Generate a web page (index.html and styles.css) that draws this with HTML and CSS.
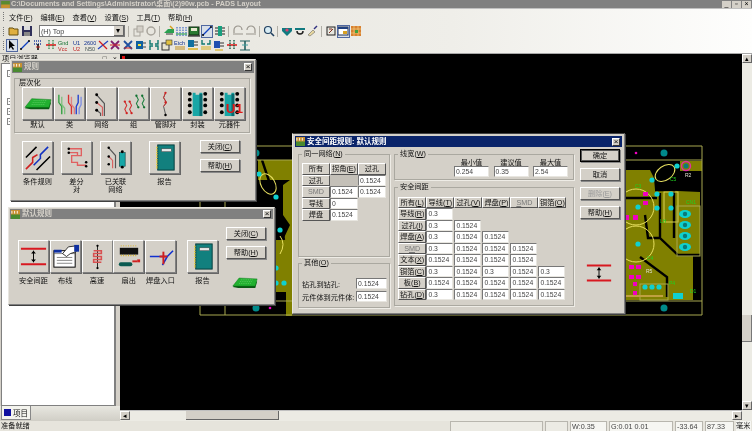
FILE: index.html
```html
<!DOCTYPE html>
<html lang="zh-CN">
<head>
    <meta charset="UTF-8">
    <title>PADS Layout</title>
    <link rel="stylesheet" href="styles.css">
</head>
<body>
<svg class="defs" width="0" height="0">
    <symbol id="i-board" viewBox="0 0 30 30">
        <path d="M2 20 L8 21 L27 21 L29 14 L10 13 Z" fill="#0a5a14"/>
        <path d="M2 19 L9 10 L29 11 L27 19 Z" fill="#22b030" stroke="#0a7a18" stroke-width=".5"/>
        <path d="M11 12h14M10 14h14M9 16h14" stroke="#7fe080" stroke-width=".6" stroke-dasharray="1 1"/>
    </symbol>
    <symbol id="i-chip" viewBox="0 0 30 30">
        <path d="M10 4h3v2h4v-2h3v24h-10z" fill="#18a6a6"/>
        <path d="M17 5h3v23h-3z" fill="#0a6a70"/>
        <g fill="#000">
            <circle cx="7" cy="5" r="2"/><circle cx="7" cy="11" r="2"/><circle cx="7" cy="17" r="2"/><circle cx="7" cy="24" r="2"/>
            <circle cx="23" cy="5" r="2"/><circle cx="23" cy="11" r="2"/><circle cx="23" cy="17" r="2"/><circle cx="23" cy="24" r="2"/>
        </g>
    </symbol>
    <symbol id="i-report" viewBox="0 0 30 30">
        <rect x="8" y="2" width="17" height="26" fill="#12807e" stroke="#063c3c"/>
        <rect x="12" y="6" width="10" height="3" fill="#e8e8e8" stroke="#444" stroke-width=".5"/>
        <path d="M7 4v23" stroke="#e8d040" stroke-width="1.5" stroke-dasharray="1.5 1"/>
    </symbol>
    <symbol id="i-gap" viewBox="0 0 30 30">
        <path d="M2 7h26M2 23h26" stroke="#d81820" stroke-width="2"/>
        <path d="M15 9v12" stroke="#000"/>
        <path d="M12.5 12 L15 9 L17.5 12 Z M12.5 18 L15 21 L17.5 18 Z" fill="#000"/>
    </symbol>
</svg>

<div class="app">
    <div class="titlebar">
        <svg class="app-icon" viewBox="0 0 10 8"><rect width="10" height="8" fill="#5a8a30"/><rect y="4" width="10" height="4" fill="#c89030"/></svg>
        <span class="title-text">C:\Documents and Settings\Administrator\桌面\(2)90w.pcb - PADS Layout</span>
        <span class="win-btns"><i>_</i><i>▫</i><i>×</i></span>
    </div>

    <div class="bars">
        <div class="menubar">
            <span class="grip"></span>
            <span>文件(<u>F</u>)</span><span>编辑(<u>E</u>)</span><span>查看(<u>V</u>)</span><span>设置(<u>S</u>)</span><span>工具(<u>T</u>)</span><span>帮助(<u>H</u>)</span>
        </div>
        <div class="toolbar tb-one">
            <span class="grip"></span>
            <b class="tool"><svg viewBox="0 0 12 12"><path d="M1 10V3h4l1 1h4v6z" fill="#e0b040" stroke="#665010"/></svg></b>
            <b class="tool"><svg viewBox="0 0 12 12"><rect x="1" y="1" width="10" height="10" fill="#30305a"/><rect x="3" y="1" width="6" height="4" fill="#ddd"/><rect x="3" y="7" width="6" height="4" fill="#888"/></svg></b>
            <span class="combo"><span>(H) Top</span><i>▾</i></span>
            <span class="sep"></span>
            <b class="tool"><svg viewBox="0 0 12 12"><rect x="2" y="4" width="6" height="7" fill="none" stroke="#a8a49c"/><rect x="5" y="1" width="6" height="6" fill="#d4d0c8" stroke="#a8a49c"/></svg></b>
            <b class="tool"><svg viewBox="0 0 12 12"><circle cx="6" cy="6" r="4" fill="none" stroke="#a8a49c" stroke-width="1.5"/></svg></b>
            <span class="sep"></span>
            <b class="tool"><svg viewBox="0 0 12 12"><path d="M1 8 L5 4 H11 V8 Z" fill="#28a050"/><path d="M3 9h7" stroke="#333"/><path d="M7 1l3 3" stroke="#d8a020" stroke-width="1.5"/></svg></b>
            <b class="tool"><svg viewBox="0 0 12 12"><g stroke="#2050c0" stroke-dasharray="1.5 1"><path d="M2 2v9M5 2v9M8 2v9M11 2v9"/></g><path d="M1 9h11" stroke="#20a040"/></svg></b>
            <b class="tool"><svg viewBox="0 0 12 12"><rect x="1" y="2" width="10" height="8" fill="#2a7a30" stroke="#102a10"/><rect x="3" y="3" width="6" height="3" fill="#e8e8d0"/><path d="M0 11h12" stroke="#000"/></svg></b>
            <b class="tool on"><svg viewBox="0 0 12 12"><path d="M2 10 L10 2" stroke="#1040c0" stroke-width="1.3"/><circle cx="2" cy="10" r="1"/><circle cx="10" cy="2" r="1"/></svg></b>
            <b class="tool"><svg viewBox="0 0 12 12"><rect x="4" y="1" width="4" height="10" fill="#18a080"/><path d="M1 3h3M1 6h3M1 9h3M8 3h3M8 6h3M8 9h3" stroke="#222" stroke-width="1.2"/></svg></b>
            <span class="sep"></span>
            <b class="tool"><svg viewBox="0 0 12 12"><path d="M2 8V5a3 3 0 0 1 8 0" fill="none" stroke="#98948c" stroke-width="1.2"/><path d="M1 9h10" stroke="#98948c"/></svg></b>
            <b class="tool"><svg viewBox="0 0 12 12"><path d="M10 8V5a3 3 0 0 0-8 0" fill="none" stroke="#98948c" stroke-width="1.2"/><path d="M1 9h10" stroke="#98948c"/></svg></b>
            <span class="sep"></span>
            <b class="tool"><svg viewBox="0 0 12 12"><circle cx="5" cy="5" r="3.5" fill="#d8ecf4" stroke="#204060" stroke-width="1.2"/><path d="M8 8l3 3" stroke="#204060" stroke-width="1.6"/></svg></b>
            <span class="sep"></span>
            <b class="tool"><svg viewBox="0 0 12 12"><path d="M1 3h10v3l-5 5-5-5z" fill="#127a80"/><circle cx="6" cy="5" r="1.6" fill="#e04070"/></svg></b>
            <b class="tool"><svg viewBox="0 0 12 12"><path d="M1 3h10v2H1z" fill="#127a80"/><path d="M3 6a3 3 0 1 0 6 0" fill="none" stroke="#222" stroke-width="1.5"/></svg></b>
            <b class="tool"><svg viewBox="0 0 12 12"><path d="M2 10 L7 5 L9 7 L4 11 Z" fill="#e8d8a0" stroke="#555" stroke-width=".5"/><path d="M8 4l3-3" stroke="#303080" stroke-width="1.5"/></svg></b>
            <span class="sep"></span>
            <b class="tool"><svg viewBox="0 0 12 12"><rect x="2" y="2" width="8" height="8" fill="#e8e8e0" stroke="#222"/><path d="M4 8l4-4M4 4h3" stroke="#803020"/></svg></b>
            <b class="tool on"><svg viewBox="0 0 12 12"><rect x="1" y="2" width="10" height="8" fill="#fff" stroke="#203050"/><rect x="1" y="2" width="10" height="2" fill="#204080"/><rect x="6" y="6" width="4" height="3" fill="#d8a020"/></svg></b>
            <b class="tool"><svg viewBox="0 0 12 12"><rect x="1" y="1" width="10" height="10" fill="#d88030"/><path d="M1 4h10M1 8h10M4 1v10M8 1v10" stroke="#f0d080" stroke-width=".7"/><rect x="5" y="5" width="3" height="3" fill="#40a040"/></svg></b>
        </div>
        <div class="toolbar tb-two">
            <span class="grip"></span>
            <b class="tool on"><svg viewBox="0 0 12 12"><path d="M3 1v9l2-2 2 3 1-1-2-3h3z" fill="#000"/></svg></b>
            <b class="tool"><svg viewBox="0 0 12 12"><path d="M2 10L10 2" stroke="#1040c0" stroke-width="1.2"/><circle cx="2" cy="10" r="1"/><circle cx="10" cy="2" r="1"/></svg></b>
            <b class="tool"><svg viewBox="0 0 12 12"><path d="M2 2h8M2 5h8" stroke="#2040a0" stroke-dasharray="1 1" stroke-width="1.5"/><path d="M6 5v6" stroke="#000" stroke-width="1.5"/><path d="M4 8h4" stroke="#c02020"/></svg></b>
            <b class="tool"><svg viewBox="0 0 12 12"><path d="M1 6h10" stroke="#e02020" stroke-width="1.6"/><path d="M4 1v10M8 1v10" stroke="#208040" stroke-dasharray="1.5 1" stroke-width="1.2"/></svg></b>
            <b class="tool"><svg viewBox="0 0 12 12"><text x="0" y="5.5" class="tiny gn">Gnd</text><text x="0" y="11.5" class="tiny rd">Vcc</text></svg></b>
            <b class="tool"><svg viewBox="0 0 12 12"><text x="2" y="5.5" class="tiny bl">U1</text><text x="2" y="11.5" class="tiny rd">U2</text></svg></b>
            <b class="tool"><svg viewBox="0 0 12 12"><text x="0" y="5.5" class="tiny bl">2600</text><text x="1" y="11.5" class="tiny gr">N50</text></svg></b>
            <b class="tool"><svg viewBox="0 0 12 12"><path d="M1 10L11 2" stroke="#2040c0" stroke-width="1.3"/><path d="M2 2l8 8" stroke="#d02020" stroke-width="1.3"/></svg></b>
            <b class="tool"><svg viewBox="0 0 12 12"><path d="M2 2l8 8M10 2l-8 8" stroke="#802070" stroke-width="1.8"/><path d="M1 6h10" stroke="#d02020"/></svg></b>
            <b class="tool"><svg viewBox="0 0 12 12"><path d="M2 2l8 8M10 2l-8 8" stroke="#2050a0" stroke-width="1.8"/><path d="M2 9h8" stroke="#d02020"/></svg></b>
            <b class="tool"><svg viewBox="0 0 12 12"><rect x="1" y="2" width="7" height="8" fill="#1060a0"/><path d="M8 4h3M8 8h3" stroke="#444" stroke-width="1.2"/><rect x="3" y="5" width="3" height="2" fill="#f0e040"/></svg></b>
            <b class="tool"><svg viewBox="0 0 12 12"><path d="M2 1v4h3M10 1v4H7M2 11V7h3M10 11V7H7" fill="none" stroke="#107a70" stroke-width="1.4"/></svg></b>
            <b class="tool"><svg viewBox="0 0 12 12"><rect x="1" y="4" width="7" height="7" fill="#e8e4d0" stroke="#333"/><rect x="5" y="1" width="6" height="5" fill="#e0c040" stroke="#333" stroke-width=".6"/></svg></b>
            <b class="tool"><svg viewBox="0 0 12 12"><text x="0" y="5.5" class="tiny bl">Etch</text><path d="M1 8h10M1 10h10" stroke="#c09020" stroke-width="1.2"/></svg></b>
            <b class="tool"><svg viewBox="0 0 12 12"><rect x="1" y="1" width="6" height="7" fill="#1070a0"/><path d="M7 3h4M7 6h4" stroke="#333"/><path d="M1 10h10" stroke="#d8b020" stroke-width="1.5"/></svg></b>
            <b class="tool"><svg viewBox="0 0 12 12"><path d="M2 1v4h3M10 1v4H7" fill="none" stroke="#107a70" stroke-width="1.4"/><path d="M1 8h10M1 10h10" stroke="#d8b020" stroke-width="1.2"/></svg></b>
            <b class="tool"><svg viewBox="0 0 12 12"><rect x="1" y="2" width="6" height="7" fill="#2050b0"/><path d="M7 4h4M7 7h4" stroke="#333"/><path d="M2 11h8" stroke="#d8b020" stroke-width="1.2"/></svg></b>
            <b class="tool"><svg viewBox="0 0 12 12"><path d="M1 6h10" stroke="#e02020" stroke-width="1.6"/><path d="M4 1v10M8 1v10" stroke="#105a40" stroke-dasharray="1.5 1" stroke-width="1.4"/></svg></b>
            <b class="tool"><svg viewBox="0 0 12 12"><path d="M1 2h10M1 11h10" stroke="#206060" stroke-width="1.2"/><path d="M6 2v9" stroke="#206060" stroke-width="1.6"/><path d="M3 6h6" stroke="#40a0a0"/></svg></b>
        </div>
    </div>

    <div class="workspace">
        <aside class="explorer">
            <div class="explorer-head"><span>项目浏览器</span><span class="head-btns">-□×</span></div>
            <div class="tree">
                <i class="node top">-</i>
                <i class="node">+</i>
                <i class="node">+</i>
                <i class="node">+</i>
            </div>
            <div class="tabs"><span class="tab"><i class="tab-dot"></i>项目</span></div>
        </aside>

        <div class="view">
            <div class="view-row">
                <main class="canvas">
                    <i class="origin"></i>
                    <svg class="pcb" width="622" height="357" viewBox="120 54 622 357">
                        <g fill="#808000">
                            <path d="M258 160H292V316H286V292H236V282H275V240H283L290 225L283 215V185L290 180H258Z"/>
                            <path d="M626 170H650L654 178L655 190L700 192V255H693V300H626Z"/>
                            <path d="M680 161H702V171H680Z"/>
                        </g>
                        <g fill="none" stroke="#000" stroke-width="2.4">
                            <path d="M626 198H657M660 193V238L678 255H700M660 238H648L645 215M640 257L667 277V297M655 190H674V238"/>
                            <path d="M262 186L278 206L284 240M262 160L272 190"/>
                        </g>
                        <g fill="none" stroke="#a8a850">
                            <path d="M200 146H702V315H200Z"/>
                            <path d="M225 160H702M225 301H702M225 146V315"/>
                            <rect x="664" y="192" width="14" height="30" stroke="#d8d050"/>
                            <rect x="677" y="206" width="23" height="50"/>
                            <rect x="640" y="284" width="28" height="16"/>
                        </g>
                        <g fill="none" stroke="#e8e060">
                            <circle cx="636" cy="207" r="18"/>
                            <circle cx="636" cy="244" r="18"/>
                            <ellipse cx="665" cy="173" rx="11" ry="7" transform="rotate(-35 665 173)"/>
                            <ellipse cx="268" cy="184" rx="7" ry="11" transform="rotate(-30 268 184)"/>
                            <path d="M280 236q6 8 0 18"/>
                        </g>
                        <g fill="#10d0d0">
                            <circle cx="664" cy="153" r="3.5" fill="#008a8a"/>
                            <circle cx="664" cy="308" r="3.5" fill="#008a8a"/>
                            <circle cx="256" cy="153" r="3.5" fill="#008a8a"/>
                            <circle cx="256" cy="308" r="3.5" fill="#008a8a"/>
                            <circle cx="677" cy="166" r="2.6"/><circle cx="652" cy="180" r="2.6"/>
                            <circle cx="657" cy="194" r="2.6"/><circle cx="671" cy="194" r="2.6"/>
                            <circle cx="657" cy="208" r="2.6"/><circle cx="671" cy="208" r="2.6"/>
                            <circle cx="638" cy="207" r="2.6"/><circle cx="638" cy="244" r="2.6"/>
                            <circle cx="645" cy="287" r="2.6"/><circle cx="652" cy="287" r="2.6"/><circle cx="659" cy="287" r="2.6"/>
                            <circle cx="259" cy="174" r="2.6"/><circle cx="276" cy="197" r="2.6"/><circle cx="280" cy="230" r="2.6"/>
                            <circle cx="276" cy="268" r="2.6"/><circle cx="276" cy="283" r="2.6"/><circle cx="284" cy="283" r="2.6"/>
                            <rect x="673" y="293" width="10" height="6"/>
                            <ellipse cx="685" cy="214" rx="6" ry="4"/><ellipse cx="685" cy="225" rx="6" ry="4"/>
                            <ellipse cx="685" cy="236" rx="6" ry="4"/><ellipse cx="685" cy="247" rx="6" ry="4"/>
                        </g>
                        <g fill="#0a7a7a">
                            <circle cx="685" cy="214" r="2.2"/><circle cx="685" cy="225" r="2.2"/>
                            <circle cx="685" cy="236" r="2.2"/><circle cx="685" cy="247" r="2.2"/>
                            <circle cx="686" cy="166" r="2.5"/>
                        </g>
                        <circle cx="686" cy="166" r="4.5" fill="none" stroke="#e030a0" stroke-width="1.4"/>
                        <g fill="#f000c0">
                            <circle cx="636" cy="153" r="1.3"/><circle cx="270" cy="308" r="1.3"/>
                            <rect x="643" y="192" width="5" height="4"/><rect x="643" y="201" width="5" height="4"/>
                            <rect x="625" y="215" width="4" height="5"/><rect x="633" y="215" width="5" height="5"/>
                            <rect x="629" y="265" width="5" height="4"/><rect x="636" y="265" width="5" height="4"/>
                            <rect x="629" y="275" width="5" height="4"/><rect x="636" y="275" width="5" height="4"/>
                            <rect x="633" y="282" width="4" height="4"/><rect x="633" y="291" width="4" height="4"/>
                        </g>
                        <rect x="626" y="295" width="37" height="2" fill="#c0a040"/>
                        <g class="silk">
                            <text x="685" y="177">R2</text><text x="646" y="273">R5</text>
                        </g>
                        <g class="nets">
                            <text x="635" y="188">C3</text><text x="670" y="181">C5</text><text x="686" y="204">CN1</text><text x="660" y="223">LH</text>
                            <text x="647" y="260">C4</text><text x="669" y="285">P4</text><text x="690" y="293">D1</text>
                        </g>
                    </svg>
                </main>
                <div class="vscroll">
                    <span class="sb-btn">▴</span>
                    <div class="vtrack"><span class="vthumb"></span></div>
                    <span class="sb-btn">▾</span>
                </div>
            </div>
            <div class="hscroll">
                <span class="sb-btn">◂</span>
                <div class="htrack"><span class="hthumb"></span></div>
                <span class="sb-btn">▸</span>
            </div>
        </div>
    </div>

    <div class="statusbar">
        <span class="ready">准备就绪</span>
        <span class="pane p1"></span>
        <span class="pane p2"></span>
        <span class="pane p3">W:0.35</span>
        <span class="pane p4">G:0.01 0.01</span>
        <span class="pane p5">-33.64</span>
        <span class="pane p6">87.33</span>
        <span class="pane p7">毫米</span>
    </div>

    <!-- 规则 -->
    <section class="dialog rules-win">
        <header class="cap off">
            <svg class="cap-icon" viewBox="0 0 10 10"><rect width="10" height="10" fill="#c89030"/><rect y="5" width="10" height="5" fill="#4a8a30"/><path d="M1 1v3M4 1v3M7 1v3" stroke="#fff"/></svg>
            <span>规则</span><b class="cap-x">×</b>
        </header>
        <div class="group hier">
            <div class="hier-title">层次化</div>
            <div class="tile-row">
                <div class="tile-item"><span class="tile"><svg viewBox="0 0 30 30"><use href="#i-board"/></svg></span><em>默认</em></div>
                <div class="tile-item"><span class="tile"><svg viewBox="0 0 30 30"><g fill="none" stroke-width="1.4"><path d="M4 6v8l3 4v8" stroke="#30a040"/><path d="M7 8v8l3 4v6" stroke="#80c080"/><path d="M14 6v8l3 4v8" stroke="#d83030"/><path d="M17 8v8l3 4v6" stroke="#e08080"/><path d="M24 6v8l-2 4v8" stroke="#2040d0"/><path d="M27 8v8l-2 4v6" stroke="#8090e0"/></g></svg></span><em>类</em></div>
                <div class="tile-item"><span class="tile"><svg viewBox="0 0 30 30"><path d="M10 6l8 9v13" fill="none" stroke="#555" stroke-width="1.2"/><path d="M10 14l6 5v9" fill="none" stroke="#d86060" stroke-width="1.2"/><path d="M10 22l4 3v3" fill="none" stroke="#555" stroke-width="1.2"/><circle cx="10" cy="6" r="1.5"/><circle cx="10" cy="14" r="1.5"/><circle cx="10" cy="22" r="1.5"/></svg></span><em>网络</em></div>
                <div class="tile-item"><span class="tile"><svg viewBox="0 0 30 30"><g fill="none" stroke-width="1.1"><path d="M6 13l2 4-2 4 2 4M11 13l2 4-2 4 2 4" stroke="#d03030"/><path d="M18 7l2 4-2 4 2 4M24 7l2 4-2 4 2 4" stroke="#208040"/></g><g fill="#d02020"><circle cx="6" cy="13" r="1.2"/><circle cx="11" cy="13" r="1.2"/><circle cx="8" cy="25" r="1.2"/><circle cx="13" cy="25" r="1.2"/></g><g fill="#107030"><circle cx="18" cy="7" r="1.2"/><circle cx="24" cy="7" r="1.2"/><circle cx="20" cy="19" r="1.2"/><circle cx="26" cy="19" r="1.2"/></g></svg></span><em>组</em></div>
                <div class="tile-item"><span class="tile"><svg viewBox="0 0 30 30"><path d="M15 4l-2 5 3 5-3 4 2 8" fill="none" stroke="#555" stroke-width="1"/><path d="M15 4l-2 5 3 5-3 4" fill="none" stroke="#d03030" stroke-width="1"/><circle cx="15" cy="4" r="1.2" fill="#d02020"/><circle cx="15" cy="14" r="1.2" fill="#d02020"/><circle cx="15" cy="27" r="1.3"/></svg></span><em>管脚对</em></div>
                <div class="tile-item"><span class="tile"><svg viewBox="0 0 30 30"><use href="#i-chip"/></svg></span><em>封装</em></div>
                <div class="tile-item"><span class="tile"><svg viewBox="0 0 30 30"><use href="#i-chip"/><text x="11" y="25" class="u1">U1</text></svg></span><em>元器件</em></div>
            </div>
        </div>
        <div class="rules-lower">
            <div class="tile-item"><span class="tile"><svg viewBox="0 0 30 30"><path d="M3 15L14 4M14 28L28 14" stroke="#000" stroke-width="1.6"/><path d="M3 27L10 20V15L15 12" fill="none" stroke="#d02020" stroke-width="1.6"/><path d="M11 23L18 16V12L26 4" fill="none" stroke="#1030c0" stroke-width="1.6"/></svg></span><em>条件规则</em></div>
            <div class="tile-item"><span class="tile"><svg viewBox="0 0 30 30"><path d="M7 6h13v7H10v7h6v3h9M7 10h9v3" fill="none" stroke="#e06060" stroke-width="1.4"/><circle cx="7" cy="6" r="1.3"/><circle cx="7" cy="10" r="1.3"/><circle cx="25" cy="20" r="1.3"/><circle cx="25" cy="24" r="1.3"/></svg></span><em>差分<br>对</em></div>
            <div class="tile-item"><span class="tile"><svg viewBox="0 0 30 30"><path d="M8 5l7 8v13" fill="none" stroke="#555" stroke-width="1.2"/><path d="M8 14l4 4v8" fill="none" stroke="#d86060" stroke-width="1.2"/><circle cx="8" cy="5" r="1.3"/><circle cx="8" cy="14" r="1.3"/><circle cx="8" cy="22" r="1.3"/><rect x="19" y="10" width="6" height="14" fill="#18a6a6" stroke="#063c3c" stroke-width=".6"/><circle cx="22" cy="9" r="1.5"/><circle cx="22" cy="25" r="1.5"/></svg></span><em>已关联<br>网络</em></div>
            <div class="tile-item report"><span class="tile"><svg viewBox="0 0 30 30"><use href="#i-report"/></svg></span><em>报告</em></div>
            <div class="side-btns">
                <span class="btn">关闭(<u>C</u>)</span>
                <span class="btn">帮助(<u>H</u>)</span>
            </div>
        </div>
    </section>

    <!-- 默认规则 -->
    <section class="dialog default-win">
        <header class="cap off">
            <svg class="cap-icon" viewBox="0 0 10 10"><rect width="10" height="10" fill="#c89030"/><rect y="5" width="10" height="5" fill="#4a8a30"/><path d="M1 1v3M4 1v3M7 1v3" stroke="#fff"/></svg>
            <span>默认规则</span><b class="cap-x">×</b>
        </header>
        <div class="default-body">
            <div class="default-tiles">
                <div class="tile-item"><span class="tile"><svg viewBox="0 0 30 30"><use href="#i-gap"/></svg></span><em>安全间距</em></div>
                <div class="tile-item"><span class="tile"><svg viewBox="0 0 30 30"><rect x="3" y="9" width="22" height="17" fill="#fff" stroke="#000"/><path d="M3 12h22M6 16h16M6 19h16M6 22h16" stroke="#555" stroke-width=".7"/><rect x="3" y="8" width="8" height="3" fill="#1030a0"/><path d="M12 12l6-7 8-1v6l-6 2-4 3z" fill="#fff" stroke="#000" stroke-width=".8"/><rect x="24" y="3" width="5" height="7" fill="#1030a0"/></svg></span><em>布线</em></div>
                <div class="tile-item"><span class="tile"><svg viewBox="0 0 30 30"><path d="M15 3v24" stroke="#222"/><path d="M11 9h8v3h-8v3h8v3h-8v3h8" fill="none" stroke="#d85050" stroke-width="1.6"/><circle cx="15" cy="4" r="1.2"/><circle cx="15" cy="27" r="1.2"/></svg></span><em>高速</em></div>
                <div class="tile-item"><span class="tile"><svg viewBox="0 0 30 30"><rect x="6" y="6" width="19" height="7" fill="#111"/><path d="M7 14h17" stroke="#d8b020" stroke-dasharray="1 1.5" stroke-width="1.4"/><path d="M7 4h17" stroke="#d8b020" stroke-dasharray="1 1.5"/><rect x="5" y="21" width="14" height="4" rx="2" fill="#0a5a50"/><path d="M19 20h5" stroke="#d02020" stroke-width="2"/><rect x="24" y="18" width="3" height="3" fill="#d02020"/></svg></span><em>扇出</em></div>
                <div class="tile-item"><span class="tile"><svg viewBox="0 0 30 30"><path d="M4 15h18M22 15l6-6M17 24l5-9" fill="none" stroke="#1030d0" stroke-width="1.6"/><path d="M18 10v13" stroke="#d02020" stroke-width="2"/><path d="M14 15h8" stroke="#d02020" stroke-width="2"/></svg></span><em>焊盘入口</em></div>
            </div>
            <div class="tile-item report"><span class="tile"><svg viewBox="0 0 30 30"><use href="#i-report"/></svg></span><em>报告</em></div>
            <div class="side-col">
                <span class="btn">关闭(<u>C</u>)</span>
                <span class="btn">帮助(<u>H</u>)</span>
                <svg class="mini-board" viewBox="0 0 30 30"><use href="#i-board"/></svg>
            </div>
        </div>
    </section>

    <!-- 安全间距规则 -->
    <section class="dialog gap-win">
        <header class="cap">
            <svg class="cap-icon" viewBox="0 0 10 10"><rect width="10" height="10" fill="#c89030"/><rect y="5" width="10" height="5" fill="#4a8a30"/><path d="M1 1v3M4 1v3M7 1v3" stroke="#fff"/></svg>
            <span>安全间距规则: 默认规则</span><b class="cap-x">×</b>
        </header>
        <div class="gap-body">
            <div class="gap-left">
                <fieldset class="group same-net">
                    <legend>同一网络(<u>N</u>)</legend>
                    <div class="same-grid">
                        <span class="hd">所有</span><span class="hd">拐角(<u>E</u>)</span><span class="hd">过孔</span>
                        <span class="hd">过孔</span><span class="blank"></span><span class="val">0.1524</span>
                        <span class="hd dim">SMD</span><span class="val">0.1524</span><span class="val">0.1524</span>
                        <span class="hd">导线</span><span class="val">0</span><span></span>
                        <span class="hd">焊盘</span><span class="val">0.1524</span><span></span>
                    </div>
                </fieldset>
                <fieldset class="group other">
                    <legend>其他(<u>O</u>)</legend>
                    <div class="other-row"><label>钻孔到钻孔:</label><span class="val">0.1524</span></div>
                    <div class="other-row"><label>元件体到元件体:</label><span class="val">0.1524</span></div>
                </fieldset>
            </div>
            <div class="gap-mid">
                <fieldset class="group width">
                    <legend>线宽(<u>W</u>)</legend>
                    <div class="width-grid">
                        <label>最小值</label><label>建议值</label><label>最大值</label>
                        <span class="val">0.254</span><span class="val">0.35</span><span class="val">2.54</span>
                    </div>
                </fieldset>
                <fieldset class="group clear">
                    <legend>安全间距</legend>
                    <div class="clear-grid">
                        <span class="hd">所有(<u>L</u>)</span><span class="hd">导线(<u>T</u>)</span><span class="hd">过孔(<u>V</u>)</span><span class="hd">焊盘(<u>P</u>)</span><span class="hd dim"><u>S</u>MD</span><span class="hd">铜箔(<u>O</u>)</span>
                        <span class="hd">导线(<u>R</u>)</span><span class="val">0.3</span><span></span><span></span><span></span><span></span>
                        <span class="hd">过孔(<u>I</u>)</span><span class="val">0.3</span><span class="val">0.1524</span><span></span><span></span><span></span>
                        <span class="hd">焊盘(<u>A</u>)</span><span class="val">0.3</span><span class="val">0.1524</span><span class="val">0.1524</span><span></span><span></span>
                        <span class="hd dim">S<u>M</u>D</span><span class="val">0.3</span><span class="val">0.1524</span><span class="val">0.1524</span><span class="val">0.1524</span><span></span>
                        <span class="hd">文本(<u>X</u>)</span><span class="val">0.1524</span><span class="val">0.1524</span><span class="val">0.1524</span><span class="val">0.1524</span><span></span>
                        <span class="hd">铜箔(<u>C</u>)</span><span class="val">0.3</span><span class="val">0.1524</span><span class="val">0.3</span><span class="val">0.1524</span><span class="val">0.3</span>
                        <span class="hd">板(<u>B</u>)</span><span class="val">0.1524</span><span class="val">0.1524</span><span class="val">0.1524</span><span class="val">0.1524</span><span class="val">0.1524</span>
                        <span class="hd">钻孔(<u>D</u>)</span><span class="val">0.3</span><span class="val">0.1524</span><span class="val">0.1524</span><span class="val">0.1524</span><span class="val">0.1524</span>
                    </div>
                </fieldset>
            </div>
            <div class="gap-right">
                <span class="btn default">确定</span>
                <span class="btn">取消</span>
                <span class="btn disabled">删除(<u>E</u>)</span>
                <span class="btn">帮助(<u>H</u>)</span>
                <svg class="gap-symbol" viewBox="0 0 30 30" preserveAspectRatio="none"><use href="#i-gap"/></svg>
            </div>
        </div>
    </section>
</div>
</body>
</html>
```

FILE: styles.css
```css
* {
    box-sizing: border-box;
}
body {
    margin: 0;
    background: #d4d0c8;
    font-family: "Liberation Sans", "Noto Sans CJK SC", sans-serif;
    font-size: 7.2px;
    color: #111;
    overflow: hidden;
}
i, em, b {
    font-style: normal;
    font-weight: normal;
}
u {
    text-decoration: underline;
}
.defs {
    position: absolute;
}
.app {
    position: relative;
    width: 752px;
    height: 431px;
    display: flex;
    flex-direction: column;
    overflow: hidden;
    filter: blur(.25px);
}

/* main title */
.titlebar {
    height: 8px;
    background: #808080;
    display: flex;
    align-items: center;
    color: #d4d0c8;
    font-weight: bold;
    font-size: 7.2px;
    line-height: 8px;
    overflow: hidden;
    flex: none;
}
.app-icon {
    width: 9px;
    height: 7px;
    margin: 0 1px 0 1px;
}
.title-text {
    flex: 1;
    white-space: nowrap;
}
.win-btns {
    display: flex;
    gap: 1px;
    padding-right: 1px;
}
.win-btns i {
    width: 9px;
    height: 7px;
    background: #d4d0c8;
    color: #000;
    font-size: 7px;
    line-height: 6px;
    text-align: center;
}

/* menu + toolbars */
.bars {
    height: 46px;
    flex: none;
    background: linear-gradient(90deg, #e4e2da 0%, #efeee9 60%, #fefefd 100%);
    border-top: 1px solid #c0c0c0;
    border-bottom: 1px solid #a8a8a8;
}
.grip {
    width: 2px;
    height: 9px;
    border-left: 1px dotted #777;
    margin: 0 3px 0 3px;
    flex: none;
}
.menubar {
    height: 14px;
    display: flex;
    align-items: center;
    gap: 8px;
    padding-top: 1px;
}
.menubar .grip {
    margin-right: -4px;
}
.toolbar {
    display: flex;
    align-items: center;
    height: 14px;
}
.tb-one {
    width: 360px;
    margin-top: 1px;
}
.tb-two {
    width: 252px;
}
.tb-one .grip {
    margin-right: 2.5px;
}
.tb-two .grip {
    margin-right: .5px;
}
.tool {
    width: 12.7px;
    height: 13px;
    display: flex;
    align-items: center;
    justify-content: center;
    flex: none;
}
.tb-two .tool {
    width: 12.95px;
}
.tool svg {
    width: 12px;
    height: 12px;
}
.tool.on {
    background: #d8dfe8;
    outline: 1px solid #5068a0;
    outline-offset: -1px;
}
.tiny {
    font-size: 5.5px;
}
.gn { fill: #107030; }
.rd { fill: #c02020; }
.bl { fill: #103090; }
.gr { fill: #405050; }
.sep {
    width: 5.6px;
    height: 11px;
    flex: none;
}
.sep::after {
    content: "";
    display: block;
    width: 1px;
    height: 11px;
    margin: 0 auto;
    background: #b0aea6;
}
.combo {
    width: 86px;
    height: 12px;
    margin: 0 1px 0 6px;
    background: #fff;
    border: 1px solid #777;
    display: flex;
    justify-content: space-between;
    align-items: center;
    padding-left: 1px;
    color: #444;
    flex: none;
}
.combo i {
    width: 10px;
    height: 10px;
    background: #d4d0c8;
    border: 1px solid #666;
    border-width: 0 1px 1px 0;
    color: #000;
    text-align: center;
    line-height: 9px;
    font-size: 8px;
}

/* middle */
.workspace {
    flex: 1;
    display: flex;
    min-height: 0;
    background: #ecebe4;
}
.explorer {
    width: 120px;
    flex: none;
    display: flex;
    flex-direction: column;
    background: #d4d0c8;
}
.explorer-head {
    height: 9px;
    flex: none;
    display: flex;
    justify-content: space-between;
    padding: 0 3px 0 2px;
    line-height: 9px;
    background: #e2e0d8;
}
.head-btns {
    letter-spacing: 6px;
    margin-right: -6px;
}
.tree {
    flex: 1;
    background: #fff;
    width: 115px;
    margin-left: 1px;
    border: 1px solid #808080;
    border-right-width: 2px;
    padding: 34px 0 0 5px;
    display: flex;
    flex-direction: column;
    gap: 3px;
    align-items: flex-start;
    position: relative;
}
.node {
    width: 7px;
    height: 7px;
    border: 1px solid #888;
    font-size: 7px;
    line-height: 5px;
    text-align: center;
    color: #222;
}
.node.top {
    position: absolute;
    top: 6px;
}
.tabs {
    height: 15px;
    flex: none;
    background: linear-gradient(#e8e7e0, #d0cec6);
}
.tab {
    display: inline-flex;
    align-items: center;
    gap: 2px;
    height: 14px;
    padding: 0 2px;
    background: #f4f4ee;
    border: 1px solid #888;
    border-top: none;
    margin-left: 1px;
    width: 30px;
    white-space: nowrap;
    font-size: 7.5px;
}
.tab-dot {
    width: 7px;
    height: 7px;
    background: #1010a0;
    flex: none;
}
.view {
    flex: 1;
    display: flex;
    flex-direction: column;
    min-width: 0;
}
.view-row {
    flex: 1;
    display: flex;
    min-height: 0;
}
.canvas {
    flex: 1;
    background: #000;
    position: relative;
    overflow: hidden;
}
.pcb {
    position: absolute;
    left: 0;
    top: 0;
}
.origin {
    position: absolute;
    left: 2px;
    top: 2px;
    width: 3px;
    height: 3px;
    background: #e01010;
}
.silk text, .nets text {
    font-size: 5px;
}
.silk text {
    fill: #e0e0d0;
}
.nets text {
    fill: #20d020;
}
.vscroll {
    width: 10px;
    flex: none;
    display: flex;
    flex-direction: column;
    background: #ecebe4;
}
.vtrack {
    flex: 1;
    display: flex;
    flex-direction: column;
    justify-content: flex-end;
    padding-bottom: 59px;
}
.vthumb {
    height: 27px;
    background: #d4d0c8;
    border-bottom: 1px solid #777;
    border-right: 1px solid #777;
}
.sb-btn {
    width: 10px;
    height: 9px;
    flex: none;
    background: #d4d0c8;
    border-right: 1px solid #666;
    border-bottom: 1px solid #666;
    border-top: 1px solid #fff;
    border-left: 1px solid #fff;
    color: #000;
    font-size: 7px;
    line-height: 7px;
    text-align: center;
}
.hscroll {
    height: 11px;
    flex: none;
    display: flex;
    margin-right: 10px;
    background: #ecebe4;
    border-top: 1px solid #c0c0c0;
}
.htrack {
    flex: 1;
    padding-left: 56px;
}
.hthumb {
    display: block;
    width: 93px;
    height: 9px;
    background: #d4d0c8;
    border-right: 1px solid #666;
    border-bottom: 1px solid #666;
}

/* status */
.statusbar {
    height: 10px;
    flex: none;
    display: flex;
    align-items: stretch;
    gap: 2px;
    background: #e6e4dc;
    line-height: 10px;
}
.ready {
    width: 448px;
    padding-left: 1px;
}
.pane {
    border: 1px solid #b8b6ae;
    border-bottom: none;
    background: #f6f6f2;
    padding-left: 1px;
    overflow: hidden;
    white-space: nowrap;
    color: #444;
}
.p1 { width: 93px; background: #ecebe4; }
.p2 { width: 23px; background: #ecebe4; }
.p3 { width: 37px; }
.p4 { width: 64px; }
.p5 { width: 28px; }
.p6 { width: 29px; }
.p7 { width: 15px; color: #111; padding: 0; border: none; }

/* dialogs */
.dialog {
    position: absolute;
    background: #d4d0c8;
    border: 1px solid #808080;
    border-top-color: #e8e6e0;
    border-left-color: #e8e6e0;
    box-shadow: 1px 1px 0 #404040;
    padding: 1px;
    display: flex;
    flex-direction: column;
}
.rules-win {
    left: 10px;
    top: 59px;
    width: 246px;
    height: 142px;
}
.default-win {
    left: 8px;
    top: 207px;
    width: 267px;
    height: 98px;
}
.gap-win {
    left: 292px;
    top: 133px;
    width: 333px;
    height: 181px;
    padding: 2px;
    border-top-color: #404040;
}
.cap {
    height: 10px;
    flex: none;
    display: flex;
    align-items: center;
    gap: 2px;
    padding: 0 1px;
    background: #0a246a;
    color: #fff;
    font-weight: bold;
    font-size: 7.5px;
    line-height: 10px;
}
.gap-win .cap {
    height: 11px;
}
.cap.off {
    background: #808080;
    color: #d4d0c8;
}
.rules-win .cap {
    height: 12px;
}
.cap-icon {
    width: 9px;
    height: 9px;
}
.cap span {
    flex: 1;
}
.cap-x {
    width: 8px;
    height: 8px;
    background: #d4d0c8;
    color: #000;
    border: 1px solid #333;
    border-top-color: #fff;
    border-left-color: #fff;
    font-size: 8px;
    line-height: 6px;
    text-align: center;
    margin-right: 1px;
}
.group {
    margin: 0;
    border: 1px solid #aaa8a0;
    box-shadow: 1px 1px 0 #eeece6;
    padding: 0;
    min-width: 0;
}
.group legend {
    margin-left: 3px;
    padding: 0 2px;
    line-height: 10px;
}

.tile {
    display: flex;
    align-items: center;
    justify-content: center;
    width: 31px;
    height: 33px;
    background: #d4d0c8;
    border: 1px solid #808080;
    border-top-color: #fff;
    border-left-color: #fff;
    box-shadow: 1px 1px 0 #666;
}
.tile svg {
    width: 29px;
    height: 29px;
}
.tile-item {
    display: flex;
    flex-direction: column;
    align-items: center;
    width: 31px;
    flex: none;
}
.tile-item em {
    text-align: center;
    line-height: 8px;
    margin-top: 4px;
    white-space: nowrap;
}
.u1 {
    font-size: 14px;
    font-weight: bold;
    fill: #e01818;
}

/* 规则 */
.hier {
    margin: 5px 4px 0 2px;
    height: 55px;
    padding-left: 7px;
    flex: none;
}
.hier-title {
    height: 8px;
    line-height: 8px;
    margin-left: -3px;
}
.tile-row {
    display: flex;
    gap: 1px;
}
.tile-row .tile-item em {
    margin-top: 1px;
}
.rules-lower {
    display: flex;
    margin: 8px 0 0 10px;
    gap: 8px;
}
.rules-lower .report {
    margin-left: 10px;
}
.side-btns {
    display: flex;
    flex-direction: column;
    gap: 6px;
    margin-left: 12px;
    margin-top: -1px;
}
.btn {
    display: block;
    width: 40px;
    height: 13px;
    flex: none;
    background: #d4d0c8;
    border: 1px solid #555;
    border-top-color: #fff;
    border-left-color: #fff;
    box-shadow: 1px 1px 0 #888;
    line-height: 11px;
    text-align: center;
}

/* 默认规则 */
.default-body {
    display: flex;
    padding: 21px 0 0 8px;
}
.default-tiles {
    display: flex;
    gap: .75px;
    flex: none;
}
.default-body .report {
    margin-left: 11px;
}
.side-col {
    display: flex;
    flex-direction: column;
    gap: 6px;
    margin: -13px 0 0 8px;
}
.mini-board {
    width: 27px;
    height: 27px;
    margin: 4px 0 0 5px;
}

/* 安全间距规则 */
.gap-body {
    flex: 1;
    display: flex;
    gap: 4px;
    padding: 2px 0 0 3px;
}
.gap-left {
    width: 92px;
    flex: none;
    display: flex;
    flex-direction: column;
    gap: 1px;
}
.same-net {
    height: 108px;
}
.same-grid {
    display: grid;
    grid-template-columns: 28px 28px 28px;
    grid-auto-rows: 11.6px;
    margin: 4px 0 0 3px;
}
.hd {
    background: #d4d0c8;
    border: 1px solid #555;
    border-top-color: #fff;
    border-left-color: #fff;
    line-height: 9.5px;
    text-align: center;
    white-space: nowrap;
    overflow: hidden;
}
.hd.dim {
    color: #777;
}
.val {
    display: block;
    background: #fff;
    border: 1px solid #777;
    border-right-color: #e8e6e0;
    border-bottom-color: #e8e6e0;
    font-size: 6.8px;
    line-height: 9.5px;
    padding-left: 1px;
    color: #444;
    white-space: nowrap;
    overflow: hidden;
}
.blank {
    background: #c4c0b8;
}
.other {
    height: 50px;
}
.other-row {
    display: flex;
    justify-content: space-between;
    align-items: center;
    white-space: nowrap;
    margin: 2px 2px 0 3px;
}
.other legend + .other-row {
    margin-top: 10px;
}
.other-row .val {
    width: 31px;
    height: 11px;
    flex: none;
}
.gap-mid {
    width: 180px;
    flex: none;
    display: flex;
    flex-direction: column;
    gap: 2px;
}
.width {
    height: 31px;
}
.width-grid {
    display: grid;
    grid-template-columns: 35px 35px 35px;
    column-gap: 4.5px;
    grid-template-rows: 7px 11px;
    text-align: center;
    line-height: 7px;
    margin-left: 59px;
}
.width-grid .val {
    text-align: left;
}
.clear {
    height: 124px;
}
.clear-grid {
    display: grid;
    grid-template-columns: 28.4px repeat(5, 28px);
    grid-auto-rows: 11.45px;
    margin: 5px 0 0 3px;
}
.clear-grid .val {
    margin-right: 1px;
}
.gap-right {
    flex: 1;
    display: flex;
    flex-direction: column;
    gap: 6px;
    padding-left: 2px;
    align-items: flex-start;
}
.btn.default {
    border: 1px solid #000;
    outline: 1px solid #555;
    outline-offset: -2px;
}
.btn.disabled {
    color: #999;
}
.gap-symbol {
    width: 28px;
    height: 28px;
    margin: 34px 0 0 5px;
}
```
